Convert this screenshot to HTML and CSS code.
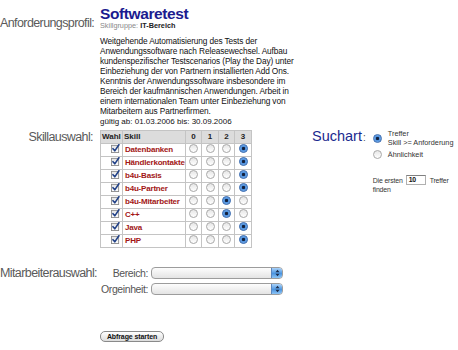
FILE: index.html
```html
<!DOCTYPE html>
<html lang="de">
<head>
<meta charset="utf-8">
<title>Softwaretest</title>
<link rel="stylesheet" href="styles.css">
</head>
<body>
<svg class="defs" width="0" height="0" aria-hidden="true">
  <defs>
    <linearGradient id="cbg" x1="0" y1="0" x2="0" y2="1">
      <stop offset="0" stop-color="#e4e4e4"/>
      <stop offset="1" stop-color="#ffffff"/>
    </linearGradient>
    <symbol id="chk" viewBox="0 0 10 10">
      <rect x="0.5" y="1.5" width="8" height="8" fill="url(#cbg)" stroke="#8a8a8a" stroke-width="1"/>
      <path d="M2.2 5.2 L4.2 7.6 L8.8 0.8" fill="none" stroke="#1f3f86" stroke-width="1.7" stroke-linecap="round" stroke-linejoin="round"/>
    </symbol>
  </defs>
</svg>

<div class="row profile">
  <div class="label profile-label">Anforderungsprofil:</div>
  <div class="content">
    <h1 class="title">Softwaretest</h1>
    <div class="group"><span class="muted">Skillgruppe:</span> <b>IT-Bereich</b></div>
    <p class="desc">Weitgehende Automatisierung des Tests der<br>Anwendungssoftware nach Releasewechsel. Aufbau<br>kundenspezifischer Testscenarios (Play the Day) unter<br>Einbeziehung der von Partnern installierten Add Ons.<br>Kenntnis der Anwendungssoftware insbesondere im<br>Bereich der kaufmännischen Anwendungen. Arbeit in<br>einem internationalen Team unter Einbeziehung von<br>Mitarbeitern aus Partnerfirmen.</p>
    <p class="valid">gültig ab: 01.03.2006 bis: 30.09.2006</p>
  </div>
</div>

<div class="row skills">
  <div class="label skills-label">Skillauswahl:</div>
  <div class="skills-body">
    <table class="skill-table">
      <colgroup><col class="c-wahl"><col class="c-skill"><col class="c-n"><col class="c-n2"><col class="c-n"><col class="c-n2"></colgroup>
      <thead>
        <tr><th class="th-l">Wahl</th><th class="th-l">Skill</th><th>0</th><th>1</th><th>2</th><th>3</th></tr>
      </thead>
      <tbody>
        <tr><td class="wahl"><svg class="cb"><use href="#chk"/></svg></td><td class="skill">Datenbanken</td><td><span class="radio"></span></td><td><span class="radio"></span></td><td><span class="radio"></span></td><td><span class="radio on"></span></td></tr>
        <tr><td class="wahl"><svg class="cb"><use href="#chk"/></svg></td><td class="skill">Händlerkontakte</td><td><span class="radio"></span></td><td><span class="radio"></span></td><td><span class="radio"></span></td><td><span class="radio on"></span></td></tr>
        <tr><td class="wahl"><svg class="cb"><use href="#chk"/></svg></td><td class="skill">b4u-Basis</td><td><span class="radio"></span></td><td><span class="radio"></span></td><td><span class="radio"></span></td><td><span class="radio on"></span></td></tr>
        <tr><td class="wahl"><svg class="cb"><use href="#chk"/></svg></td><td class="skill">b4u-Partner</td><td><span class="radio"></span></td><td><span class="radio"></span></td><td><span class="radio"></span></td><td><span class="radio on"></span></td></tr>
        <tr><td class="wahl"><svg class="cb"><use href="#chk"/></svg></td><td class="skill">b4u-Mitarbeiter</td><td><span class="radio"></span></td><td><span class="radio"></span></td><td><span class="radio on"></span></td><td><span class="radio"></span></td></tr>
        <tr><td class="wahl"><svg class="cb"><use href="#chk"/></svg></td><td class="skill">C++</td><td><span class="radio"></span></td><td><span class="radio"></span></td><td><span class="radio on"></span></td><td><span class="radio"></span></td></tr>
        <tr><td class="wahl"><svg class="cb"><use href="#chk"/></svg></td><td class="skill">Java</td><td><span class="radio"></span></td><td><span class="radio"></span></td><td><span class="radio"></span></td><td><span class="radio on"></span></td></tr>
        <tr><td class="wahl"><svg class="cb"><use href="#chk"/></svg></td><td class="skill">PHP</td><td><span class="radio"></span></td><td><span class="radio"></span></td><td><span class="radio"></span></td><td><span class="radio on"></span></td></tr>
      </tbody>
    </table>

    <div class="suchart">
      <div class="suchart-title"><span class="big">Suchart</span><span class="colon">:</span></div>
      <div class="suchart-opts">
        <div class="opt opt1"><span class="radio on"></span><span class="opt-text">Treffer<br>Skill &gt;= Anforderung</span></div>
        <div class="opt opt2"><span class="radio"></span><span class="opt-text">Ähnlichkeit</span></div>
        <div class="first">
          <div class="first-line"><span>Die ersten</span><span class="num">10</span><span>Treffer</span></div>
          <div class="first-line2">finden</div>
        </div>
      </div>
    </div>
  </div>
</div>

<div class="row staff">
  <div class="label staff-label">Mitarbeiterauswahl:</div>
  <div class="staff-form">
    <div class="flabel">Bereich:</div>
    <div class="select"><span class="cap"><svg width="5" height="8" viewBox="0 0 5 8"><path d="M0.5 3.2 L2.5 0.8 L4.5 3.2 Z M0.5 4.8 L2.5 7.2 L4.5 4.8 Z" fill="#1c2c4a"/></svg></span></div>
    <div class="flabel">Orgeinheit:</div>
    <div class="select"><span class="cap"><svg width="5" height="8" viewBox="0 0 5 8"><path d="M0.5 3.2 L2.5 0.8 L4.5 3.2 Z M0.5 4.8 L2.5 7.2 L4.5 4.8 Z" fill="#1c2c4a"/></svg></span></div>
  </div>
</div>

<div class="row submit">
  <div></div>
  <div><span class="button">Abfrage starten</span></div>
</div>
</body>
</html>
```

FILE: styles.css
```css
html, body {
  margin: 0;
  padding: 0;
  background: #ffffff;
}
body {
  font-family: "Liberation Sans", Arial, sans-serif;
  color: #111;
  width: 458px;
  height: 350px;
  overflow: hidden;
}
.defs {
  position: absolute;
  width: 0;
  height: 0;
}
.row {
  display: grid;
  grid-template-columns: 93px 1fr;
  column-gap: 7px;
}
.label {
  text-align: right;
  color: #5a5a5a;
  font-size: 12.5px;
  letter-spacing: -0.6px;
  line-height: 14px;
  white-space: nowrap;
}

/* profile */
.profile {
  padding-top: 6px;
}
.profile-label {
  margin-top: 10px;
}
.title {
  margin: 0;
  font-size: 15.5px;
  line-height: 15px;
  font-weight: bold;
  letter-spacing: -0.4px;
  color: #1b1b8f;
}
.group {
  font-size: 7.3px;
  line-height: 10px;
  color: #222;
}
.group .muted {
  color: #8a8a8a;
}
.desc {
  margin: 5px 0 0;
  font-size: 8.3px;
  letter-spacing: -0.12px;
  line-height: 10px;
  white-space: nowrap;
  color: #111;
}
.valid {
  margin: 1px 0 0;
  font-size: 8px;
  line-height: 10px;
  color: #111;
}

/* skills */
.skills {
  margin-top: 3px;
}
.skills-body {
  display: flex;
  align-items: flex-start;
}
.skill-table {
  border-collapse: collapse;
  table-layout: fixed;
  width: 151px;
  border: 1px solid #a8a8a8;
}
.c-wahl { width: 22px; }
.c-skill { width: 63px; }
.c-n { width: 16px; }
.c-n2 { width: 17px; }
.skill-table th,
.skill-table td {
  border: 1px solid #c4c4c4;
  padding: 0;
  height: 12px;
  line-height: 12px;
  font-size: 8px;
  text-align: center;
  vertical-align: middle;
}
.skill-table th {
  background: #dcdcdc;
  font-weight: bold;
  color: #222;
}
.skill-table th.th-l {
  text-align: left;
  padding-left: 1px;
}
.skill-table td.wahl {
  text-align: right;
  padding-right: 2px;
}
.cb {
  width: 9px;
  height: 9px;
  display: inline-block;
  vertical-align: middle;
  margin-top: -2px;
}
.skill-table td.skill {
  text-align: left;
  padding-left: 2px;
  font-weight: bold;
  color: #a21616;
  letter-spacing: -0.2px;
  white-space: nowrap;
}
.radio {
  display: inline-block;
  width: 7px;
  height: 7px;
  border-radius: 50%;
  border: 1px solid #a9a9a9;
  background: linear-gradient(#e6e6e6, #ffffff);
  vertical-align: middle;
  margin-top: -2px;
}
.radio.on {
  border-color: #3f6cae;
  background: radial-gradient(circle, #13203c 0, #13203c 1.3px, #4c8fdc 2px, #8ec0f2 100%);
}

/* suchart */
.suchart {
  display: flex;
  align-items: flex-start;
  margin-left: 60px;
  margin-top: -2px;
}
.suchart-title {
  white-space: nowrap;
  line-height: 16px;
}
.suchart-title .big {
  font-size: 14.5px;
  color: #1b2a8f;
}
.suchart-title .colon {
  font-size: 10px;
  color: #555;
  margin-left: 1px;
}
.suchart-opts {
  margin-left: 7px;
  width: 82px;
  font-size: 7.3px;
  color: #333;
}
.opt {
  display: flex;
  align-items: center;
}
.opt .radio {
  flex: none;
  margin: 0 6px 0 0;
}
.opt1 {
  margin-top: 1px;
  line-height: 9px;
}
.opt2 {
  margin-top: 3px;
  line-height: 9px;
}
.first {
  margin-top: 16px;
  font-size: 6.9px;
  letter-spacing: -0.15px;
  color: #333;
}
.first-line {
  display: flex;
  align-items: center;
  gap: 3px;
  height: 10px;
  white-space: nowrap;
}
.first-line2 {
  line-height: 9px;
}
.num {
  width: 16px;
  height: 8px;
  line-height: 8px;
  padding-left: 2px;
  border: 1px solid #b0b0b0;
  border-top-color: #808080;
  font-weight: bold;
  color: #111;
  margin-right: 1px;
}

/* staff */
.staff {
  margin-top: 19px;
}
.staff-label {
  line-height: 12px;
}
.staff-form {
  display: grid;
  grid-template-columns: 48px 132px;
  column-gap: 3px;
  row-gap: 4px;
  align-items: center;
}
.flabel {
  text-align: right;
  font-size: 10.5px;
  letter-spacing: -0.4px;
  color: #555;
  line-height: 12px;
  white-space: nowrap;
}
.select {
  height: 10px;
  border: 1px solid #9c9c9c;
  border-radius: 4px;
  background: linear-gradient(#fdfdfd, #e4e4e4);
  display: flex;
  justify-content: flex-end;
  overflow: hidden;
}
.select .cap {
  width: 10px;
  display: flex;
  align-items: center;
  justify-content: center;
  background: linear-gradient(#a9d2fa, #4c95e0 55%, #8cc4f6);
  border-left: 1px solid #5b86bf;
}

/* submit */
.submit {
  margin-top: 30px;
}
.button {
  display: inline-block;
  width: 62px;
  height: 9px;
  line-height: 9px;
  text-align: center;
  border: 1px solid #8a8a8a;
  border-radius: 5px;
  background: linear-gradient(#ffffff, #dcdcdc);
  font-size: 7px;
  font-weight: bold;
  letter-spacing: -0.1px;
  color: #111;
}
```
